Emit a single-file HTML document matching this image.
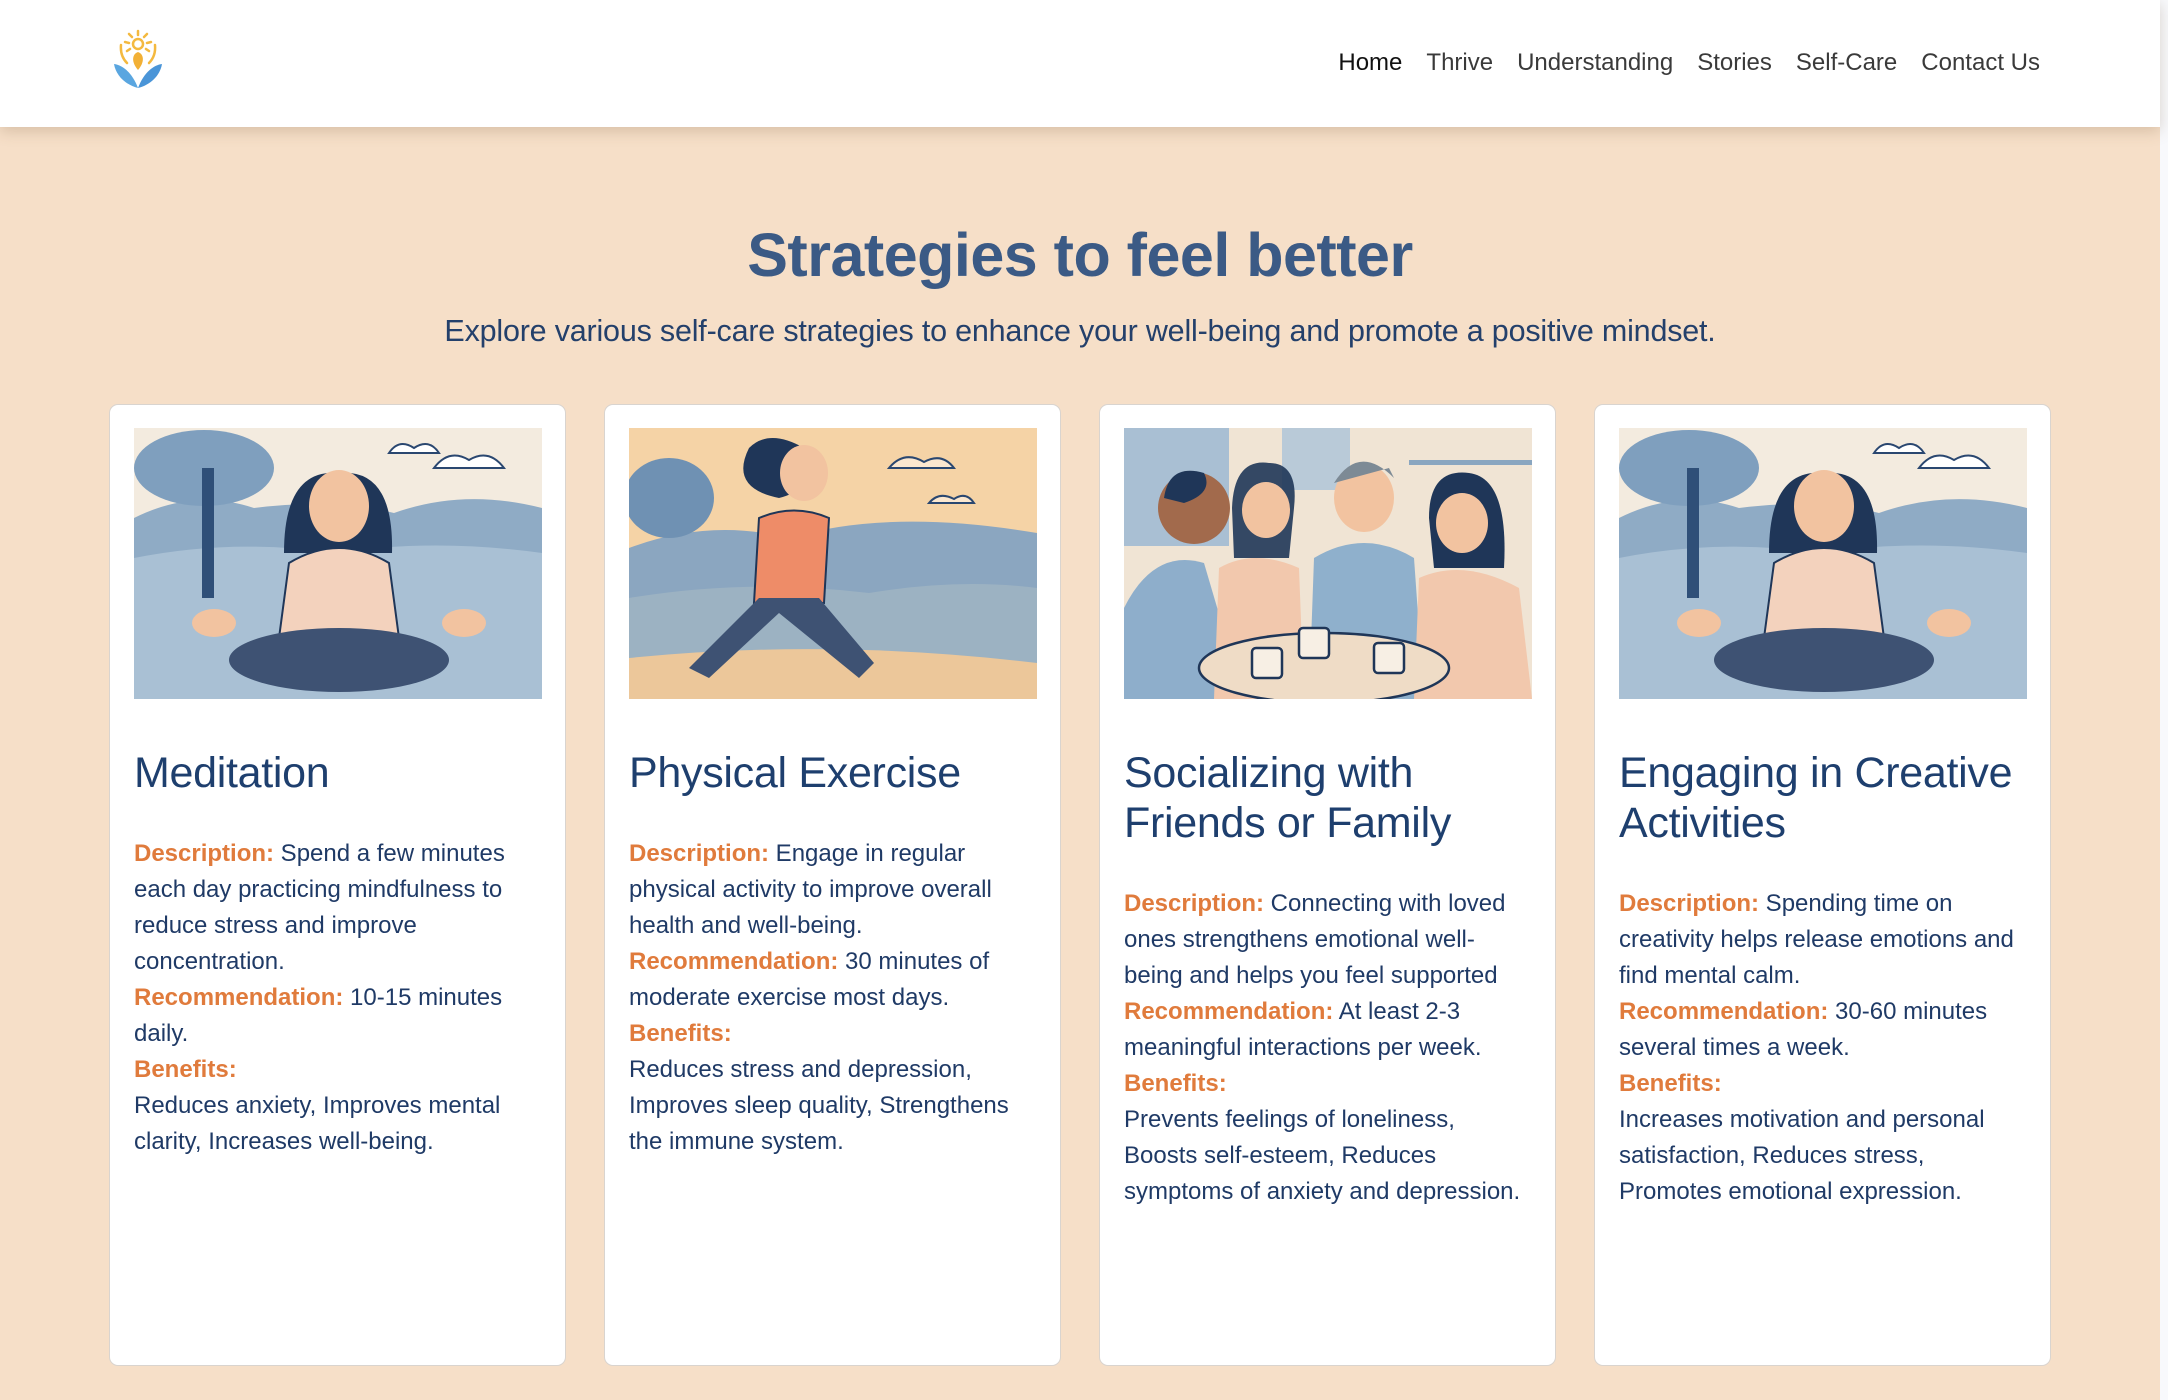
<!DOCTYPE html>
<html><head><meta charset="utf-8">
<style>
*{margin:0;padding:0;box-sizing:border-box}
html,body{width:2168px;height:1400px;overflow:hidden;background:#f8f9fc}
body{font-family:"Liberation Sans",Arial,sans-serif;position:relative}
.page{position:absolute;left:0;top:0;width:2160px;height:1400px;background:#f6dfc8}
.hdr{position:absolute;left:0;top:0;width:2160px;height:127px;background:#fff;box-shadow:0 4px 14px rgba(120,90,60,.25)}
.nav{position:absolute;top:49px;right:120px;font-size:24px;color:#3a3a3a;display:flex;gap:24px}
.nav span:first-child{color:#111}
h1{position:absolute;left:0;width:2160px;top:220px;text-align:center;font-size:61px;font-weight:bold;color:#3b5a85;letter-spacing:-0.5px}
.sub{position:absolute;left:0;width:2160px;top:314px;text-align:center;font-size:30.5px;color:#24406b;letter-spacing:-0.2px}
.card{position:absolute;top:404px;width:457px;height:962px;background:#fff;border:1.5px solid #d9d4cf;border-radius:9px}
.card svg{position:absolute;left:24px;top:23px;width:408px;height:271px}
.card h2{position:absolute;left:24px;top:343px;width:425px;font-size:43px;line-height:50px;font-weight:normal;color:#1e3f6e;letter-spacing:-0.3px}
.card .t{position:absolute;left:24px;width:408px;font-size:24px;line-height:36px;color:#1f3a66}
.card b{color:#e07b3c}
</style></head><body><div class="page">
<div class="hdr">
<svg style="position:absolute;left:112px;top:28px" width="52" height="64" viewBox="0 0 52 64">
<g stroke="#f4b93f" stroke-width="2.5" fill="none" stroke-linecap="round">
<circle cx="26" cy="16" r="5"/><line x1="26" y1="3" x2="26" y2="7"/><line x1="17" y1="6" x2="20" y2="9"/><line x1="35" y1="6" x2="32" y2="9"/><line x1="13" y1="14" x2="17" y2="15"/><line x1="39" y1="14" x2="35" y2="15"/><line x1="15" y1="23" x2="18" y2="21"/><line x1="37" y1="23" x2="34" y2="21"/>
<path d="M9 17 Q8 28 15 35"/><path d="M43 17 Q44 28 37 35"/></g>
<path d="M26 24 C20 26 19 34 26 42 C33 34 32 26 26 24Z" fill="#f2b035"/>
<path d="M26 60 C20 44 10 37 2 36 C4 48 14 57 26 60Z" fill="#5aa6e0"/>
<path d="M26 60 C32 44 42 37 50 36 C48 48 38 57 26 60Z" fill="#4a95d8"/>
</svg>
<div class="nav"><span>Home</span><span>Thrive</span><span>Understanding</span><span>Stories</span><span>Self-Care</span><span>Contact Us</span></div>
</div>
<h1>Strategies to feel better</h1>
<div class="sub">Explore various self-care strategies to enhance your well-being and promote a positive mindset.</div>

<div class="card" style="left:109px">
<svg viewBox="0 0 408 271"><rect width="408" height="271" fill="#f3ebdf"/>
<path d="M0 90 Q60 60 120 80 Q200 70 260 85 Q330 60 408 80 V271 H0Z" fill="#8fabc5"/>
<path d="M0 130 Q100 110 200 125 Q300 110 408 125 V271 H0Z" fill="#a9c0d4"/>
<ellipse cx="70" cy="40" rx="70" ry="38" fill="#7f9fbe"/><rect x="68" y="40" width="12" height="130" fill="#2f4f78"/>
<path d="M255 25 q10-15 25-5 q15-10 25 5z M300 40 q15-20 35-8 q20-12 35 8z" fill="#fff" stroke="#2a4770" stroke-width="2"/>
<path d="M150 125 Q150 40 205 45 Q260 40 258 125Z" fill="#1f3658"/>
<ellipse cx="205" cy="78" rx="30" ry="36" fill="#f2c3a0"/>
<path d="M155 135 Q205 105 255 135 L265 210 H145Z" fill="#f3d2bd" stroke="#1f3658" stroke-width="2"/>
<ellipse cx="205" cy="232" rx="110" ry="32" fill="#3e5273"/>
<ellipse cx="80" cy="195" rx="22" ry="14" fill="#f2c3a0"/><ellipse cx="330" cy="195" rx="22" ry="14" fill="#f2c3a0"/>
</svg>
<h2>Meditation</h2>
<div class="t" style="top:431px"><b>Description:</b> Spend a few minutes each day practicing mindfulness to reduce stress and improve concentration.<br><b>Recommendation:</b> 10-15 minutes daily.<br><b>Benefits:</b><br>Reduces anxiety, Improves mental clarity, Increases well-being.</div>
</div>

<div class="card" style="left:604px">
<svg viewBox="0 0 408 271"><rect width="408" height="271" fill="#f5d3a6"/>
<path d="M0 120 Q80 90 160 110 Q260 80 408 105 V271 H0Z" fill="#8ba6c0"/>
<path d="M0 170 Q120 150 240 165 Q330 150 408 160 V271 H0Z" fill="#9cb2c2"/>
<path d="M0 230 Q200 210 408 235 V271 H0Z" fill="#ecc79a"/>
<ellipse cx="40" cy="70" rx="45" ry="40" fill="#6f91b3"/>
<path d="M260 40 q15-18 35-6 q18-10 30 6z M300 75 q10-12 25-4 q12-8 20 4z" fill="#fbe7cf" stroke="#2a4770" stroke-width="2"/>
<path d="M120 20 Q140 0 175 20 Q190 60 150 70 Q100 60 120 20Z" fill="#1f3658"/>
<ellipse cx="175" cy="45" rx="24" ry="28" fill="#f2c3a0"/>
<path d="M130 90 Q165 75 200 90 L195 175 H125Z" fill="#ee8c68" stroke="#1f3658" stroke-width="2"/>
<path d="M130 170 L60 240 L80 250 L150 185 L230 250 L245 235 L190 170Z" fill="#3e5273"/>
</svg>
<h2>Physical Exercise</h2>
<div class="t" style="top:431px"><b>Description:</b> Engage in regular physical activity to improve overall health and well-being.<br><b>Recommendation:</b> 30 minutes of moderate exercise most days.<br><b>Benefits:</b><br>Reduces stress and depression, Improves sleep quality, Strengthens the immune system.</div>
</div>

<div class="card" style="left:1099px">
<svg viewBox="0 0 408 271"><rect width="408" height="271" fill="#f0e4d4"/>
<rect x="0" y="0" width="105" height="118" fill="#a9bfd3"/><rect x="158" y="0" width="68" height="62" fill="#b9cad8"/>
<rect x="285" y="32" width="125" height="5" fill="#8aa6c0"/>
<path d="M0 180 Q30 120 80 135 L120 271 H0Z" fill="#8eaecb"/>
<circle cx="70" cy="80" r="36" fill="#a26a4c"/><path d="M40 70 q5-35 40-25 q10 20-20 30z" fill="#1f3658"/>
<path d="M95 140 Q130 120 175 140 L180 271 H90Z" fill="#f2c8ad"/><path d="M108 80 Q110 30 145 35 Q175 35 170 80 L165 130 L110 130Z" fill="#1f3658" opacity=".9"/><ellipse cx="142" cy="82" rx="24" ry="28" fill="#f2c3a0"/>
<path d="M190 130 Q240 100 290 130 L300 271 H185Z" fill="#8fb0cc"/><ellipse cx="240" cy="70" rx="30" ry="34" fill="#f2c3a0"/><path d="M210 55 q25-40 60-5 l-5 -10z" fill="#7d8a95"/>
<path d="M295 150 Q340 130 395 160 L408 271 H290Z" fill="#f2c8ad"/><path d="M305 90 Q305 40 345 45 Q385 50 380 140 L310 140Z" fill="#1f3658"/><ellipse cx="338" cy="95" rx="26" ry="30" fill="#f2c3a0"/>
<ellipse cx="200" cy="240" rx="125" ry="35" fill="#efdcc6" stroke="#1f3658" stroke-width="2.5"/>
<rect x="128" y="220" width="30" height="30" rx="4" fill="#f7efe4" stroke="#1f3658" stroke-width="2.5"/><rect x="175" y="200" width="30" height="30" rx="4" fill="#f7efe4" stroke="#1f3658" stroke-width="2.5"/><rect x="250" y="215" width="30" height="30" rx="4" fill="#f7efe4" stroke="#1f3658" stroke-width="2.5"/>
</svg>
<h2>Socializing with Friends or Family</h2>
<div class="t" style="top:481px"><b>Description:</b> Connecting with loved ones strengthens emotional well-being and helps you feel supported<br><b>Recommendation:</b> At least 2-3 meaningful interactions per week.<br><b>Benefits:</b><br>Prevents feelings of loneliness, Boosts self-esteem, Reduces symptoms of anxiety and depression.</div>
</div>

<div class="card" style="left:1594px">
<svg viewBox="0 0 408 271"><rect width="408" height="271" fill="#f3ebdf"/>
<path d="M0 90 Q60 60 120 80 Q200 70 260 85 Q330 60 408 80 V271 H0Z" fill="#8fabc5"/>
<path d="M0 130 Q100 110 200 125 Q300 110 408 125 V271 H0Z" fill="#a9c0d4"/>
<ellipse cx="70" cy="40" rx="70" ry="38" fill="#7f9fbe"/><rect x="68" y="40" width="12" height="130" fill="#2f4f78"/>
<path d="M255 25 q10-15 25-5 q15-10 25 5z M300 40 q15-20 35-8 q20-12 35 8z" fill="#fff" stroke="#2a4770" stroke-width="2"/>
<path d="M150 125 Q150 40 205 45 Q260 40 258 125Z" fill="#1f3658"/>
<ellipse cx="205" cy="78" rx="30" ry="36" fill="#f2c3a0"/>
<path d="M155 135 Q205 105 255 135 L265 210 H145Z" fill="#f3d2bd" stroke="#1f3658" stroke-width="2"/>
<ellipse cx="205" cy="232" rx="110" ry="32" fill="#3e5273"/>
<ellipse cx="80" cy="195" rx="22" ry="14" fill="#f2c3a0"/><ellipse cx="330" cy="195" rx="22" ry="14" fill="#f2c3a0"/>
</svg>
<h2>Engaging in Creative Activities</h2>
<div class="t" style="top:481px"><b>Description:</b> Spending time on creativity helps release emotions and find mental calm.<br><b>Recommendation:</b> 30-60 minutes several times a week.<br><b>Benefits:</b><br>Increases motivation and personal satisfaction, Reduces stress, Promotes emotional expression.</div>
</div>
</div></body></html>
